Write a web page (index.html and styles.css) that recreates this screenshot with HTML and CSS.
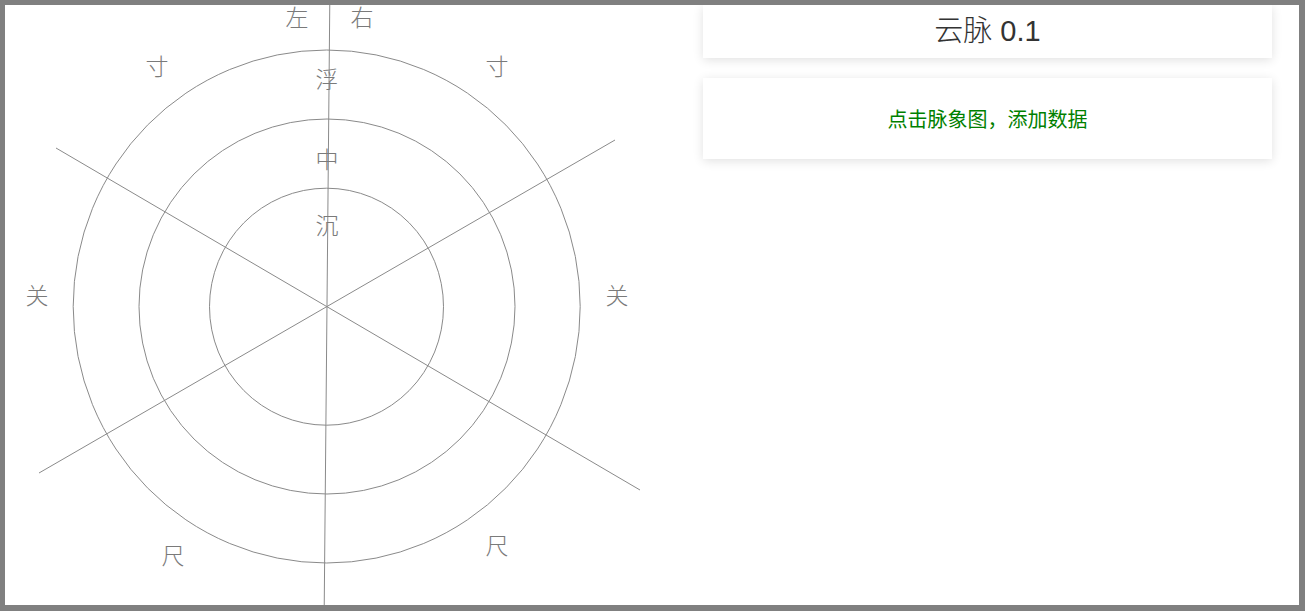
FILE: index.html
```html
<!DOCTYPE html>
<html lang="zh">
<head>
<meta charset="utf-8">
<title>云脉 0.1</title>
<link rel="stylesheet" href="styles.css">
</head>
<body>
<div class="page">
  <svg class="chart" viewBox="5 5 690 600" width="690" height="600" xmlns="http://www.w3.org/2000/svg">
    <g class="grid">
      <ellipse cx="326.7" cy="306.5" rx="253.5" ry="256.5"/>
      <ellipse cx="327" cy="306.5" rx="188" ry="187.5"/>
      <ellipse cx="326.5" cy="306.7" rx="117" ry="118.5"/>
      <line x1="330" y1="-20" x2="324" y2="630"/>
      <line x1="56" y1="148" x2="640" y2="490"/>
      <line x1="39" y1="473" x2="615" y2="140"/>
    </g>
    <g class="labels">
      <text x="297" y="16">左</text>
      <text x="362" y="16">右</text>
      <text x="157" y="65">寸</text>
      <text x="497" y="65">寸</text>
      <text x="327" y="78">浮</text>
      <text x="327" y="158">中</text>
      <text x="327" y="224">沉</text>
      <text x="37" y="294">关</text>
      <text x="617" y="294">关</text>
      <text x="173" y="554">尺</text>
      <text x="497" y="544">尺</text>
    </g>
  </svg>
  <div class="side">
    <div class="card title-card"><h1 class="title">云脉 0.1</h1></div>
    <div class="card hint-card"><p class="hint">点击脉象图，添加数据</p></div>
  </div>
</div>
</body>
</html>
```
FILE: styles.css
```css
html {
  background: #808080;
}
body {
  margin: 5px 6px 6px 5px;
  height: 600px;
  background: #fff;
  overflow: hidden;
  font-family: "Liberation Sans", "Noto Sans CJK SC", sans-serif;
}
.page {
  display: flex;
  align-items: flex-start;
  gap: 8px;
  height: 600px;
}
.chart {
  display: block;
  flex: none;
}
.grid ellipse,
.grid line {
  fill: none;
  stroke: #8a8a8a;
  stroke-width: 1;
}
.labels text {
  font-family: "Noto Sans CJK SC", sans-serif;
  font-size: 23px;
  font-weight: 300;
  fill: #7a7a7a;
  text-anchor: middle;
  dominant-baseline: central;
}
.side {
  width: 569px;
  display: flex;
  flex-direction: column;
  gap: 20px;
}
.card {
  background: #fff;
  box-shadow: 0 2px 10px rgba(0, 0, 0, 0.12);
  display: flex;
  align-items: center;
  justify-content: center;
}
.title-card {
  height: 53px;
}
.title {
  margin: 0;
  font-family: "Liberation Sans", "Noto Sans CJK SC", sans-serif;
  font-weight: 300;
  font-size: 29px;
  color: #333;
  line-height: 1;
}
.hint-card {
  height: 81px;
}
.hint {
  margin: 0;
  font-family: "Noto Sans CJK SC", sans-serif;
  font-size: 20px;
  color: #008000;
}
```
